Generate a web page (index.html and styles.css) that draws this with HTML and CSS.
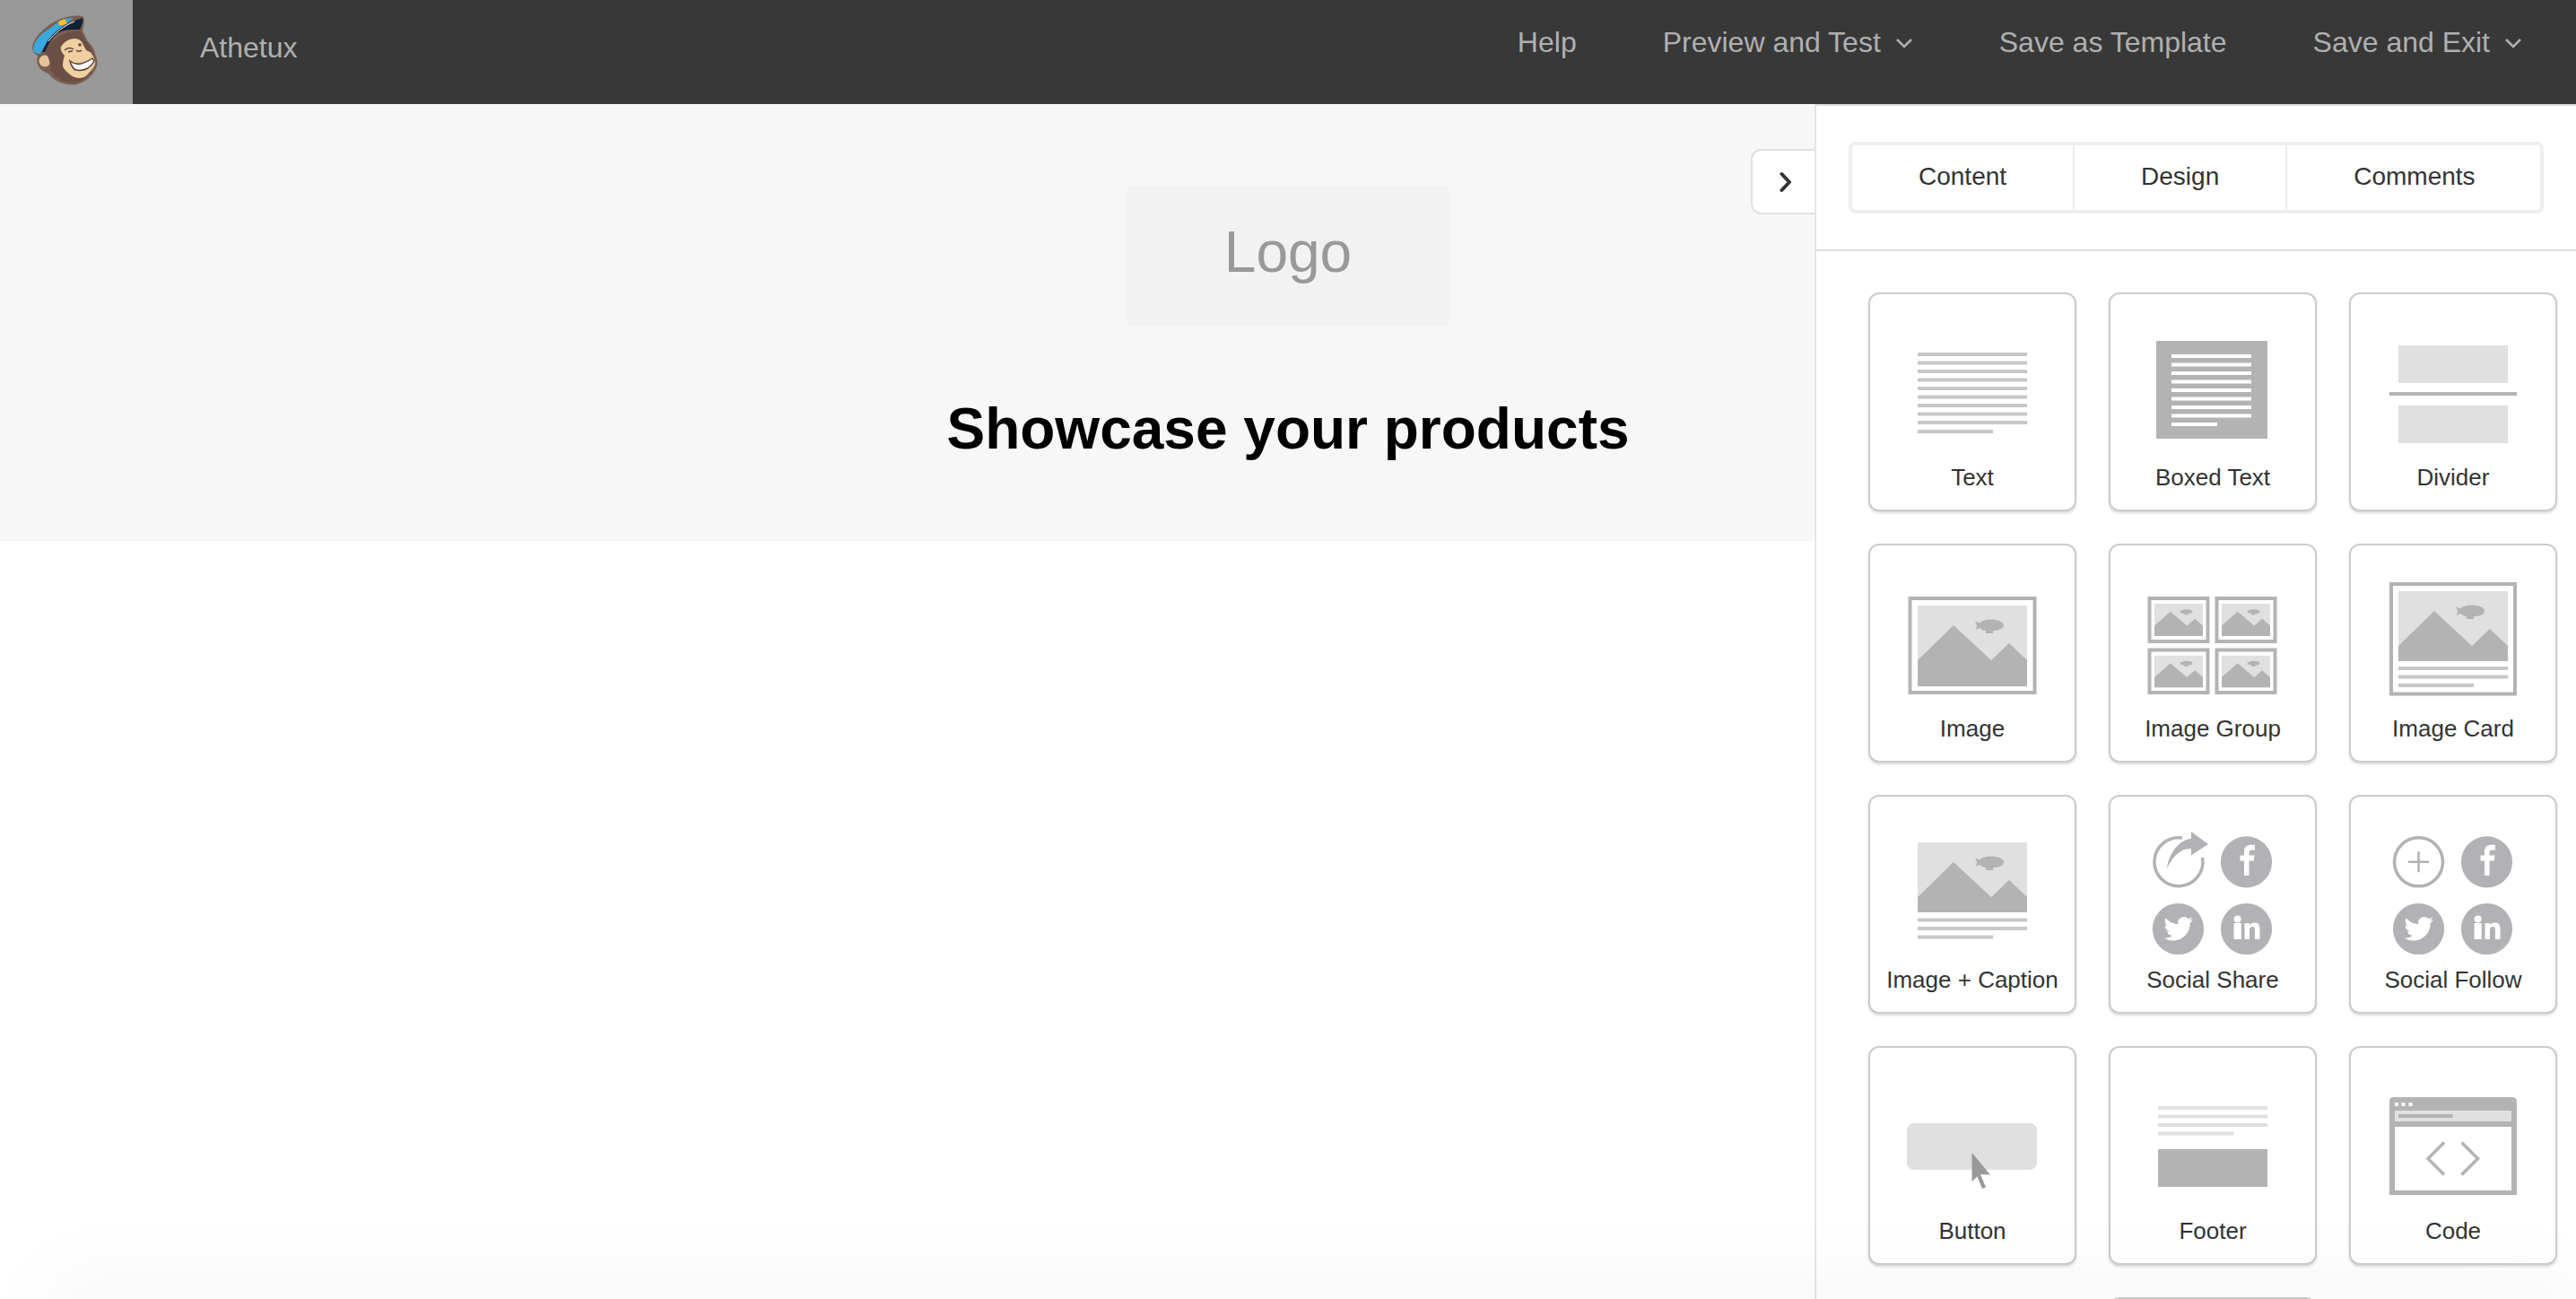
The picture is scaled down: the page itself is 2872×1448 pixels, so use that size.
FILE: index.html
```html
<!DOCTYPE html>
<html lang="en">
<head>
  <meta charset="utf-8">
  <meta name="viewport" content="width=device-width, initial-scale=1.0">
  <title>Athetux</title>
  <link rel="stylesheet" href="styles.css">
</head>
<body>
  <svg class="icon-defs" aria-hidden="true">
    <symbol id="scene" viewBox="0 0 122 90" preserveAspectRatio="none">
      <rect class="light" width="122" height="90"/>
      <polygon class="mid" points="0,61 40,22 82,61 102,42 122,61 122,90 0,90"/>
      <path class="mid" d="M64 17 L69 19.5 C72 16.5 76 15.5 81 15.5 C89 15.5 96 18 96 22 C96 26 90 28 84 28.3 L84 31 L76 31 L76 28.3 C73 28 71 26.5 69 25 L65 27 L66 22 Z"/>
    </symbol>
    <symbol id="scene-short" viewBox="0 0 122 78">
      <use href="#scene" width="122" height="90"/>
    </symbol>
    <symbol id="bird" viewBox="0 0 24 24">
      <path class="white" d="M23.953 4.57a10 10 0 01-2.825.775 4.958 4.958 0 002.163-2.723c-.951.555-2.005.959-3.127 1.184a4.92 4.92 0 00-8.384 4.482C7.69 8.095 4.067 6.13 1.64 3.162a4.822 4.822 0 00-.666 2.475c0 1.71.87 3.213 2.188 4.096a4.904 4.904 0 01-2.228-.616v.06a4.923 4.923 0 003.946 4.827 4.996 4.996 0 01-2.212.085 4.936 4.936 0 004.604 3.417 9.867 9.867 0 01-6.102 2.105c-.39 0-.779-.023-1.17-.067a13.995 13.995 0 007.557 2.209c9.053 0 13.998-7.496 13.998-13.985 0-.21 0-.42-.015-.63A9.935 9.935 0 0024 4.59z"/>
    </symbol>
    <symbol id="social-rest" viewBox="0 0 161 150">
      <circle class="social" cx="118.5" cy="44.8" r="28.6"/>
      <path class="white" d="M116 60 V43.5 H111.5 V37.5 H116 V33 C116 28 119 25.7 123.5 25.7 H128 V31.5 H125 C122.5 31.5 121.5 32.5 121.5 34.5 V37.5 H127.5 L126.7 43.5 H121.5 V60 Z"/>
      <circle class="social" cx="42.5" cy="119.5" r="28.6"/>
      <use href="#bird" x="26.4" y="103" width="32.6" height="32.6"/>
      <circle class="social" cx="118.5" cy="119.5" r="28.6"/>
      <circle class="white" cx="108.6" cy="108.6" r="4"/>
      <rect class="white" x="104.5" y="113" width="8.3" height="18"/>
      <path class="white" d="M116.5 131 V113 H122 V115.3 C123.2 113.5 125.2 112.5 127.6 112.5 C131.6 112.5 133.5 115.1 133.5 119.5 V131 H128 V120.5 C128 118.1 127.1 116.9 125.2 116.9 C123.2 116.9 122 118.3 122 120.7 V131 Z"/>
    </symbol>
  </svg>

  <header class="topbar">
    <a class="brand">
      <svg class="monkey" viewBox="0 0 148 116">
        <path class="monkey-edge" d="M36 54 C36 46 42 38 52 30 C62 22 78 16 92 18 C95 20 94 28 92 34 C94 38 96 42 97 45 C101 50 106 54 106 60 C108 64 110 72 107 76 C104 84 94 94 81 94.500 C70 94.500 60 90 54 82 C48 80 42 76 42 69 C42 65 42 63 42 62 C38 60 36 57 36 54 Z"/>
        <circle class="monkey-ear-back" cx="50" cy="68" r="9"/>
        <circle class="monkey-ear" cx="50" cy="68" r="6.500"/>
        <path class="monkey-head" d="M50 58 C56 46 68 36 89 34 C92 40 96 46 100 52 C104 58 106 66 105 72 C102 82 92 92 81 92 C70 92 60 86 56 76 C56 70 54 62 50 58 Z"/>
        <path class="monkey-skin" d="M68 52 C72 46 78 43 83 43 C88 43 91 46 92 48 C94 53 96 56 98 57 C102 58 104 62 106 68 C107 72 104 76 102 78 C98 83 94 87 90 87 C84 87 80 85 78 83 C74 80 70 76 70 73 C70 68 71 65 72 62 C69 59 67 55 68 52 Z"/>
        <path class="monkey-smile" d="M78 68 C82 71 86 72 90 71 C95 70 100 67 103 65 C104 66 105 67 105 68 C103 72 101 74 98 76 C94 78 89 79 85 78 C82 78 79 72 78 68 Z"/>
        <path class="monkey-line" d="M72 56 C75 53 79 53 82 55 M76 58 C78 57 80 57 81 57"/>
        <circle class="monkey-eye" cx="89" cy="50" r="1.800"/>
        <path class="monkey-line" d="M85 56 C87 58 90 57 91 56"/>
        <path class="monkey-blue" d="M37 57 C37 50 39 47 42 43 C46 38 50 35 55 32 C60 28 64 25 68 23 C72 21 76 20 82 20 C72 27 60 36 53 47 C50 51 47 55 45 60 C42 60 38 59 37 57 Z"/>
        <path class="monkey-navy" d="M47 58 C50 51 52 47 55 43 C64 32 78 24 92 20 C93 24 91 29 89 33 C82 33 74 33 68 35 C62 38 58 43 55 48 C53 52 51 55 50 58 Z"/>
        <path class="monkey-shine" d="M54 46 C60 38 72 28 83 24"/>
        <polygon class="monkey-badge" points="65,24 72,21 75,26 70,28 66,28"/>
      </svg>
    </a>
    <span class="account">Athetux</span>
    <nav class="topnav">
      <a class="topnav-link">Help</a>
      <a class="topnav-link">Preview and Test
        <svg class="caret" viewBox="0 0 20 12"><polyline points="2,2 10,10 18,2"/></svg>
      </a>
      <a class="topnav-link">Save as Template</a>
      <a class="topnav-link">Save and Exit
        <svg class="caret" viewBox="0 0 20 12"><polyline points="2,2 10,10 18,2"/></svg>
      </a>
    </nav>
  </header>

  <main class="workspace">
    <section class="email-head">
      <div class="logo-slot">Logo</div>
      <h1 class="email-title">Showcase your products</h1>
    </section>

    <aside class="panel">
      <button class="panel-toggle">
        <svg viewBox="0 0 14 24"><polyline points="2.500,3 11,12 2.500,21"/></svg>
      </button>
      <div class="panel-head">
        <div class="tabs">
          <a class="tab">Content</a>
          <a class="tab">Design</a>
          <a class="tab">Comments</a>
        </div>
      </div>
      <div class="blocks">
        <div class="block">
          <svg class="block-icon" viewBox="0 0 161 150">
            <rect class="soft" x="20" y="37" width="122" height="4"/>
            <rect class="soft" x="20" y="46.500" width="122" height="4"/>
            <rect class="soft" x="20" y="56" width="122" height="4"/>
            <rect class="soft" x="20" y="65.500" width="122" height="4"/>
            <rect class="soft" x="20" y="75" width="122" height="4"/>
            <rect class="soft" x="20" y="84.500" width="122" height="4"/>
            <rect class="soft" x="20" y="94" width="122" height="4"/>
            <rect class="soft" x="20" y="103.500" width="122" height="4"/>
            <rect class="soft" x="20" y="113" width="122" height="4"/>
            <rect class="soft" x="20" y="123" width="84" height="4"/>
          </svg>
          <span class="block-label">Text</span>
        </div>
        <div class="block">
          <svg class="block-icon" viewBox="0 0 161 150">
            <rect class="mid" x="18" y="24" width="124" height="109"/>
            <rect class="white" x="35" y="39" width="89" height="4"/>
            <rect class="white" x="35" y="48.500" width="89" height="4"/>
            <rect class="white" x="35" y="58" width="89" height="4"/>
            <rect class="white" x="35" y="67.500" width="89" height="4"/>
            <rect class="white" x="35" y="77" width="89" height="4"/>
            <rect class="white" x="35" y="86.500" width="89" height="4"/>
            <rect class="white" x="35" y="96" width="89" height="4"/>
            <rect class="white" x="35" y="105.500" width="89" height="4"/>
            <rect class="white" x="35" y="115" width="51" height="4"/>
          </svg>
          <span class="block-label">Boxed Text</span>
        </div>
        <div class="block">
          <svg class="block-icon" viewBox="0 0 161 150">
            <rect class="light" x="20" y="29" width="122" height="42"/>
            <rect class="mid" x="10" y="81" width="142" height="4"/>
            <rect class="light" x="20" y="96" width="122" height="42"/>
          </svg>
          <span class="block-label">Divider</span>
        </div>

        <div class="block">
          <svg class="block-icon" viewBox="0 0 161 150">
            <rect class="frame" x="11.500" y="31" width="139" height="105"/>
            <use href="#scene" x="20" y="39" width="122" height="90"/>
          </svg>
          <span class="block-label">Image</span>
        </div>
        <div class="block">
          <svg class="block-icon" viewBox="0 0 161 150">
            <rect class="frame" x="10.500" y="31" width="65" height="48"/>
            <use href="#scene" x="16" y="37" width="54" height="36"/>
            <rect class="frame" x="85.500" y="31" width="65" height="48"/>
            <use href="#scene" x="91" y="37" width="54" height="36"/>
            <rect class="frame" x="10.500" y="88.500" width="65" height="47.500"/>
            <use href="#scene" x="16" y="94.500" width="54" height="36"/>
            <rect class="frame" x="85.500" y="88.500" width="65" height="47.500"/>
            <use href="#scene" x="91" y="94.500" width="54" height="36"/>
          </svg>
          <span class="block-label">Image Group</span>
        </div>
        <div class="block">
          <svg class="block-icon" viewBox="0 0 161 150">
            <rect class="frame" x="12" y="15" width="138" height="122.500"/>
            <use href="#scene-short" x="20" y="23" width="122" height="78"/>
            <rect class="soft" x="20" y="107" width="122" height="4"/>
            <rect class="soft" x="20" y="116.500" width="122" height="4"/>
            <rect class="soft" x="20" y="126" width="84" height="4"/>
          </svg>
          <span class="block-label">Image Card</span>
        </div>

        <div class="block">
          <svg class="block-icon" viewBox="0 0 161 150">
            <use href="#scene-short" x="20" y="23" width="122" height="78"/>
            <rect class="soft" x="20" y="107.500" width="122" height="4"/>
            <rect class="soft" x="20" y="117" width="122" height="4"/>
            <rect class="soft" x="20" y="126.500" width="84" height="4"/>
          </svg>
          <span class="block-label">Image + Caption</span>
        </div>
        <div class="block">
          <svg class="block-icon" viewBox="0 0 161 150">
            <path class="ring" d="M47 18 A27 27 0 1 0 69.500 40"/>
            <path class="social" d="M30 51.500 C32 36 43 20 57 19 L57 11 L76 25 L57 37.500 L57 30 C46 29 37 38 30 51.500 Z"/>
            <use href="#social-rest" width="161" height="150"/>
          </svg>
          <span class="block-label">Social Share</span>
        </div>
        <div class="block">
          <svg class="block-icon" viewBox="0 0 161 150">
            <circle class="ring" cx="42.500" cy="44.800" r="27"/>
            <path class="plus" d="M31 44.800 H54 M42.500 33.300 V56.300"/>
            <use href="#social-rest" width="161" height="150"/>
          </svg>
          <span class="block-label">Social Follow</span>
        </div>

        <div class="block">
          <svg class="block-icon" viewBox="0 0 161 150">
            <rect class="light" x="8" y="56" width="145" height="52" rx="8"/>
            <path class="pointer" d="M80.500 89 L101 113.500 L90 113 L96 127.500 L92 129 L86.500 115.500 L80.500 121 Z"/>
          </svg>
          <span class="block-label">Button</span>
        </div>
        <div class="block">
          <svg class="block-icon" viewBox="0 0 161 150">
            <rect class="light" x="20" y="37" width="122" height="4"/>
            <rect class="light" x="20" y="46.500" width="122" height="4"/>
            <rect class="light" x="20" y="56" width="122" height="4"/>
            <rect class="light" x="20" y="65.500" width="84" height="4"/>
            <rect class="mid" x="20" y="85" width="122" height="42"/>
          </svg>
          <span class="block-label">Footer</span>
        </div>
        <div class="block">
          <svg class="block-icon" viewBox="0 0 161 150">
            <path class="mid" d="M10 32 Q10 27 15 27 H147 Q152 27 152 32 V136 H10 Z"/>
            <rect class="white" x="16" y="33" width="4" height="4"/>
            <rect class="white" x="23.500" y="33" width="4" height="4"/>
            <rect class="white" x="31.500" y="33" width="4" height="4"/>
            <rect class="light" x="16" y="42" width="130" height="12"/>
            <rect class="mid" x="20" y="46" width="60.500" height="4"/>
            <rect class="white" x="16" y="60" width="130" height="71"/>
            <polyline class="code" points="71,77.500 53,95.500 71,113.500"/>
            <polyline class="code" points="90.500,77.500 108.500,95.500 90.500,113.500"/>
          </svg>
          <span class="block-label">Code</span>
        </div>

        <div class="block block-next"></div>
      </div>
    </aside>
  </main>

  <div class="page-fade"></div>
</body>
</html>
```

FILE: styles.css
```css
* {
  box-sizing: border-box;
}

html, body {
  height: 100%;
}

body {
  margin: 0;
  overflow: hidden;
  background-color: #fff;
  font-family: "Liberation Sans", Arial, sans-serif;
}

.icon-defs {
  display: none;
}

/* top bar */
.topbar {
  display: flex;
  height: 116px;
  background-color: #383838;
  color: #b0b0b0;
  font-size: 32px;
}

.brand {
  width: 148px;
  background-color: #999;
}

.monkey {
  display: block;
  width: 148px;
  height: 116px;
}

.monkey-edge { fill: #7a5d52; }
.monkey-head { fill: #6a4f44; }
.monkey-ear-back { fill: #7a5d52; }
.monkey-ear { fill: #e6c49b; }
.monkey-skin { fill: #f0cfa0; }
.monkey-smile { fill: #fff; stroke: #5b4136; stroke-width: 1.500; }
.monkey-line { fill: none; stroke: #5b4136; stroke-width: 1.500; }
.monkey-eye { fill: #5b4136; }
.monkey-blue { fill: #3aa8dd; }
.monkey-navy { fill: #0f2236; }
.monkey-shine { fill: none; stroke: #fff; stroke-width: 1; }
.monkey-badge { fill: #f2c230; }

.account {
  margin-left: 75px;
  padding-top: 35px;
  line-height: 37px;
}

.topnav {
  display: flex;
  gap: 96px;
  margin-left: auto;
  padding: 29px 60px 0 0;
}

.topnav-link {
  display: flex;
  align-items: center;
  gap: 16px;
  height: 37px;
  white-space: nowrap;
}

.caret {
  width: 20px;
  height: 12px;
  fill: none;
  stroke: #b0b0b0;
  stroke-width: 2.500;
}

/* email canvas */
.workspace {
  position: relative;
  height: 1332px;
}

.email-head {
  display: flex;
  flex-direction: column;
  align-items: center;
  height: 487px;
  padding-top: 91px;
  background-color: #f7f7f7;
}

.logo-slot {
  display: flex;
  align-items: center;
  justify-content: center;
  width: 362px;
  height: 157px;
  padding-bottom: 10px;
  border-radius: 10px;
  background-color: #f2f2f2;
  color: #999;
  font-size: 64px;
}

.email-title {
  margin: 77px 0 0;
  color: #000;
  font-size: 64px;
  line-height: 74px;
}

/* right panel */
.panel {
  position: absolute;
  top: 0;
  right: 0;
  bottom: 0;
  display: flex;
  flex-direction: column;
  width: 849px;
  border-top: 2px solid #ddd;
  border-left: 2px solid #e6e6e6;
  background-color: #fff;
}

.panel-toggle {
  position: absolute;
  top: 48px;
  right: calc(100% + 2px);
  display: flex;
  align-items: center;
  justify-content: center;
  width: 71px;
  height: 73px;
  padding: 0 0 0 4px;
  border: 2px solid #e0e0e0;
  border-right: 0;
  border-radius: 12px 0 0 12px;
  background-color: #fff;
}

.panel-toggle svg {
  width: 14px;
  height: 24px;
  fill: none;
  stroke: #333;
  stroke-width: 4;
  stroke-linejoin: round;
  stroke-linecap: round;
}

.panel-head {
  height: 162px;
  padding: 40px 36px;
  border-bottom: 2px solid #ddd;
}

.tabs {
  display: flex;
  height: 80px;
  border: 4px solid #eee;
  border-radius: 8px;
}

.tab {
  display: flex;
  flex: 1 1 auto;
  align-items: center;
  justify-content: center;
  padding: 0 74px 2px;
  border-left: 2px solid #eee;
  color: #333;
  font-size: 28px;
}

.tab:first-child {
  border-left: 0;
}

.blocks {
  display: grid;
  flex: 1;
  grid-template-columns: repeat(3, 232px);
  grid-auto-rows: 244px;
  gap: 36px;
  padding: 46px 0 0 58px;
  overflow: hidden;
}

.block {
  display: flex;
  flex-direction: column;
  align-items: center;
  border: 2px solid #ccc;
  border-radius: 12px;
  background-color: #fff;
  box-shadow: 0 2px 3px rgba(0, 0, 0, 0.15);
}

.block-next {
  grid-column: 2;
}

.block-icon {
  width: 161px;
  height: 150px;
  margin: 28px 1px 0 0;
}

.block-label {
  margin-top: 11px;
  color: #333;
  font-size: 26px;
  line-height: 30px;
  white-space: nowrap;
}

/* icon fills */
.white { fill: #fff; }
.light { fill: #e0e0e0; }
.soft { fill: #c8c8c8; }
.mid { fill: #b3b3b3; }
.social { fill: #b2b2b6; }
.frame { fill: #fff; stroke: #b3b3b3; stroke-width: 4; }
.ring { fill: none; stroke: #b2b2b6; stroke-width: 3.500; }
.plus { fill: none; stroke: #b2b2b6; stroke-width: 2.500; }
.pointer { fill: #999; }
.code { fill: none; stroke: #b3b3b3; stroke-width: 3.500; }

/* soft shadow from whatever sits below the fold */
.page-fade {
  position: fixed;
  right: 0;
  bottom: -30px;
  left: 56px;
  height: 30px;
  box-shadow: 0 0 100px rgba(0, 0, 0, 0.1);
  pointer-events: none;
}
```
